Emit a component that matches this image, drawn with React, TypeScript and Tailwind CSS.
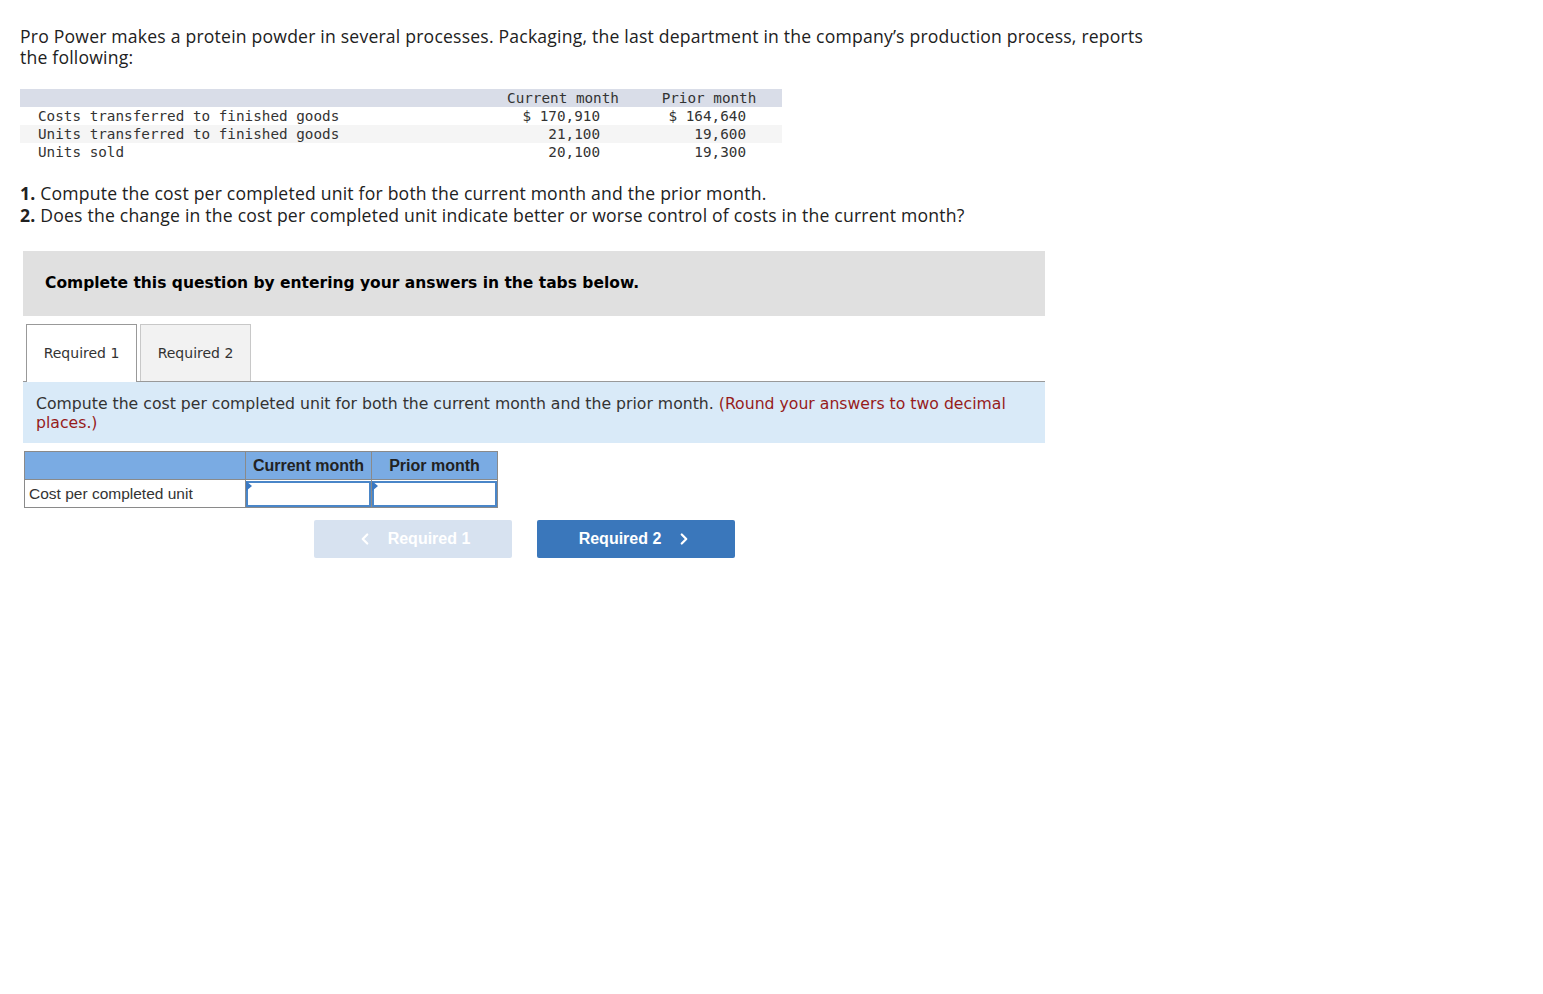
import { ChevronLeft, ChevronRight } from "lucide-react";

const rows = [
  { label: "Costs transferred to finished goods", cur: "$ 170,910", prior: "$ 164,640" },
  { label: "Units transferred to finished goods", cur: "21,100", prior: "19,600" },
  { label: "Units sold", cur: "20,100", prior: "19,300" },
];

function AnswerCell() {
  return (
    <td className="border border-[#8a8a8a] p-0">
      <div className="relative h-[26px] border-2 border-[#4a86c8] bg-white">
        {/* small corner flag */}
        <div className="absolute -left-[2px] -top-[2px] h-0 w-0 border-y-[5px] border-l-[6px] border-y-transparent border-l-[#3a78c2]" />
      </div>
    </td>
  );
}

export default function App() {
  return (
    <div className="min-h-screen bg-white px-5 pt-[26px] text-[#212121]">
      {/* --- Problem text --- */}
      <p className="w-[1132px] font-['Open_Sans',sans-serif] text-[17.6px] leading-[21px] tracking-[0.2px]">
        Pro Power makes a protein powder in several processes. Packaging, the last department in the company’s production process, reports
        the following:
      </p>

      {/* --- Data table --- */}
      <div className="mt-[21px] w-[762px] font-['DejaVu_Sans_Mono',monospace] text-[14.3px] leading-[18px] text-[#333]">
        <div className="grid grid-cols-[470px_146px_146px] bg-[#d9dde8]">
          <div />
          <div className="text-center">Current month</div>
          <div className="text-center">Prior month</div>
        </div>
        {rows.map((r, i) => (
          <div
            key={r.label}
            className={`grid grid-cols-[470px_146px_146px] ${i === 1 ? "bg-[#f5f5f5]" : "bg-white"}`}
          >
            <div className="pl-[18px]">{r.label}</div>
            <div className="pr-[36px] text-right">{r.cur}</div>
            <div className="pr-[36px] text-right">{r.prior}</div>
          </div>
        ))}
      </div>

      {/* --- Requirements --- */}
      <div className="mt-[21px] font-['Open_Sans',sans-serif] text-[17.6px] leading-[22px] tracking-[0.2px]">
        <p>
          <span className="font-bold">1.</span> Compute the cost per completed unit for both the current month and the prior month.
        </p>
        <p>
          <span className="font-bold">2.</span> Does the change in the cost per completed unit indicate better or worse control of costs in the current month?
        </p>
      </div>

      {/* --- Instructions banner --- */}
      <div className="ml-[3px] mt-[25px] flex h-[65px] w-[1022px] items-center bg-[#e0e0e0] pl-[22px] font-['DejaVu_Sans',sans-serif] text-[15.5px] font-bold text-black">
        Complete this question by entering your answers in the tabs below.
      </div>

      {/* --- Tabs --- */}
      <div className="ml-[3px] mt-[8px] flex w-[1022px] gap-[3px] border-b border-[#999] pl-[3px] font-['DejaVu_Sans',sans-serif] text-[14px] text-[#333]">
        <div className="-mb-px flex h-[58px] w-[111px] items-center justify-center border border-b-0 border-[#999] bg-white">
          Required 1
        </div>
        <div className="flex h-[57px] w-[111px] items-center justify-center border border-b-0 border-[#c8c8c8] bg-[#f2f2f2]">
          Required 2
        </div>
      </div>

      <div className="ml-[3px] w-[1022px] bg-[#d9eaf8] px-[13px] pb-[11px] pt-[12px] font-['DejaVu_Sans',sans-serif] text-[15.7px] leading-[19px] text-[#333]">
        Compute the cost per completed unit for both the current month and the prior month.{" "}
        <span className="text-[#961b1b]">(Round your answers to two decimal places.)</span>
      </div>

      {/* --- Answer table --- */}
      <table className="ml-[4px] mt-[8px] border-collapse font-['Liberation_Sans',sans-serif] text-[16px]">
        <thead>
          <tr className="h-[28px] bg-[#7aabe3]">
            <th className="w-[221px] border border-[#8a8a8a]" />
            <th className="w-[126px] border border-[#8a8a8a] text-center font-bold text-[#222]">Current month</th>
            <th className="w-[126px] border border-[#8a8a8a] text-center font-bold text-[#222]">Prior month</th>
          </tr>
        </thead>
        <tbody>
          <tr className="h-[28px]">
            <td className="border border-[#8a8a8a] pl-[4px] text-left text-[15.5px] text-[#333]">Cost per completed unit</td>
            <AnswerCell />
            <AnswerCell />
          </tr>
        </tbody>
      </table>

      {/* --- Navigation --- */}
      <div className="ml-[294px] mt-[12px] flex gap-[25px] font-['Liberation_Sans',sans-serif] text-[16px] font-bold text-white">
        <button className="flex h-[38px] w-[198px] items-center justify-center gap-[14px] rounded-[2px] bg-[#d7e2f0]">
          <ChevronLeft className="h-[18px] w-[18px]" strokeWidth={3} />
          Required 1
        </button>
        <button className="flex h-[38px] w-[198px] items-center justify-center gap-[14px] rounded-[2px] bg-[#3a77bb]">
          Required 2
          <ChevronRight className="h-[18px] w-[18px]" strokeWidth={3} />
        </button>
      </div>
    </div>
  );
}
